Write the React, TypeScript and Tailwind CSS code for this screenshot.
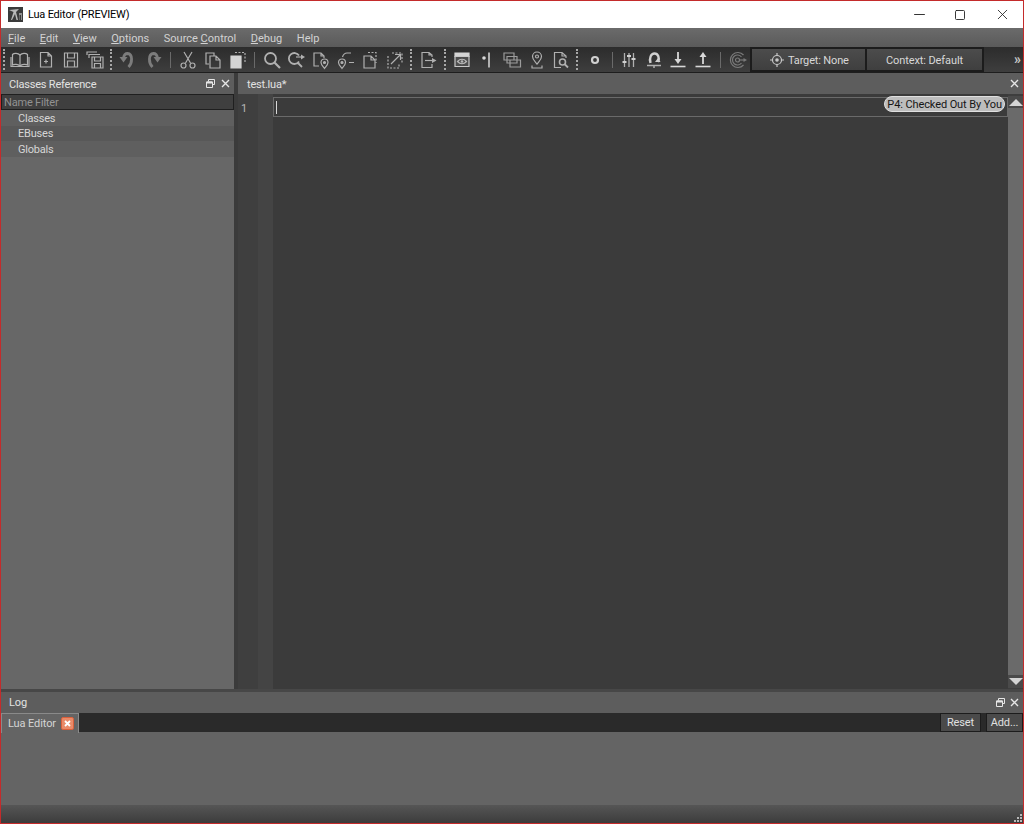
import type { ReactNode } from "react";
import { Minus, Square, X } from "lucide-react";

const font = { fontFamily: 'Roboto, "Liberation Sans", sans-serif' };

function Icon({ w, children }: { w: number; children: ReactNode }) {
  return (
    <div className="flex h-full shrink-0 items-center justify-center" style={{ width: w }}>
      <svg width="20" height="20" viewBox="0 0 20 20" fill="none" stroke="#b0b0b0" strokeWidth="1.200">
        {children}
      </svg>
    </div>
  );
}

function Dots({ w }: { w: number }) {
  return (
    <div className="flex h-full shrink-0 items-center justify-center" style={{ width: w }}>
      <div className="h-[21px] border-l-2 border-dotted border-[#a8a8a8]" />
    </div>
  );
}

function Sep({ w }: { w: number }) {
  return (
    <div className="flex h-full shrink-0 items-center justify-center" style={{ width: w }}>
      <div className="h-[16px] w-px bg-[#6a6a6a]" />
    </div>
  );
}

function Toolbar() {
  return (
    <div className="flex h-[26px] shrink-0 items-center border-b border-[#1e1e1e] bg-gradient-to-b from-[#2c2c2c] to-[#3e3e3e]">
      <Dots w={6} />
      <Icon w={26}>
        <path d="M10 5C8 3 4 3 2.500 4.500V15C4 14 8 14 10 16C12 14 16 14 17.500 15V4.500C16 3 12 3 10 5Z" />
        <path d="M10 5V16M1 7V16.500H19V7" />
      </Icon>
      <Icon w={25}>
        <path d="M4.500 2.500H12L15.500 6V17H4.500ZM12 2.500V6H15.500M10 9.500V13.500M8 11.500H12" />
      </Icon>
      <Icon w={25}>
        <path d="M3.500 3H16.500V17H3.500ZM6.500 3V8H13.500V3M6.500 17V11H13.500V17" />
      </Icon>
      <Icon w={24}>
        <path d="M2 5V2H12M4 8V4.500H15M7 7H18V18H7ZM9.500 7V11H15.500V7M9.500 18V13.500H15.500V18" />
      </Icon>
      <Dots w={8} />
      <Icon w={25}>
        <path d="M10.500 17C14.500 13 15 4 9.500 3.500C7 3.500 6 5 5.500 8" stroke="#7c7c7c" strokeWidth="2.800" />
        <path d="M1.500 7H9.500L5.500 12.500Z" fill="#7c7c7c" stroke="none" />
      </Icon>
      <Icon w={25}>
        <path d="M9.500 17C5.500 13 5 4 10.500 3.500C13 3.500 14 5 14.500 8" stroke="#7c7c7c" strokeWidth="2.800" />
        <path d="M10.500 7H18.500L14.500 12.500Z" fill="#7c7c7c" stroke="none" />
      </Icon>
      <Sep w={11} />
      <Icon w={24}>
        <path d="M6 2L12.500 13M14 2L7.500 13" />
        <circle cx="5.500" cy="15.500" r="2.500" />
        <circle cx="14.500" cy="15.500" r="2.500" />
      </Icon>
      <Icon w={25}>
        <path d="M6 14H3V3H11V6M7 6H13L17 10V18H7ZM13 6V10H17" />
      </Icon>
      <Icon w={25}>
        <path d="M3 6H13V18H3Z" fill="#d4d4d4" stroke="#d4d4d4" />
        <path d="M7 2.500H17V13" strokeDasharray="2 1.500" />
      </Icon>
      <Sep w={9} />
      <Icon w={25}>
        <circle cx="8.500" cy="8.500" r="5.500" strokeWidth="1.800" />
        <path d="M12.500 12.500L18 18" strokeWidth="2.200" />
      </Icon>
      <Icon w={24}>
        <path d="M13 5.500A5.500 5.500 0 1 0 13 11.500M11.500 12.500L16 17" strokeWidth="1.800" />
        <path d="M10 7H16" />
        <path d="M15 4.500L19 7L15 9.500Z" fill="#b0b0b0" stroke="none" />
      </Icon>
      <Icon w={25}>
        <path d="M8 16H3V3H10L13 6V8M10 3V6H13" />
        <path d="M13.500 18.500C11.500 16 10 14.500 10 12.500A3.500 3.500 0 0 1 17 12.500C17 14.500 15.500 16 13.500 18.500Z" />
        <circle cx="13.500" cy="12.500" r="1" fill="#b0b0b0" />
      </Icon>
      <Icon w={25}>
        <path d="M15 3H11C9 3 7 5 6.500 7M13 12.500H18" />
        <path d="M6 18.500C4 16 2.500 14.500 2.500 12.500A3.500 3.500 0 0 1 9.500 12.500C9.500 14.500 8 16 6 18.500Z" />
        <circle cx="6" cy="12.500" r="1" fill="#b0b0b0" />
      </Icon>
      <Icon w={24}>
        <path d="M4 6H11L15 10V18H4ZM11 6V10H15" />
        <path d="M8 2.500H16V13" strokeDasharray="2 1.500" />
      </Icon>
      <Icon w={25}>
        <path d="M3 6V18H14V14M7 3H17V13" strokeDasharray="2 1.500" />
        <path d="M6 14L15 5M10 4.500H15.500V10" />
      </Icon>
      <Dots w={8} />
      <Icon w={25}>
        <path d="M14 7V5L11 2.500H4V17.500H14V14M11 2.500V5H14" />
        <path d="M7 10.500H15" />
        <path d="M14 8L18.500 10.500L14 13Z" fill="#b0b0b0" stroke="none" />
      </Icon>
      <Dots w={9} />
      <Icon w={25}>
        <path d="M3 3H17V6.500H3Z" fill="#d4d4d4" stroke="#d4d4d4" />
        <path d="M3 6.500H17V16.500H3Z" fill="#4e4e4e" stroke="#c8c8c8" />
        <path d="M5.500 11.500C8 8.500 12 8.500 14.500 11.500C12 14.500 8 14.500 5.500 11.500Z" stroke="#b8b8b8" />
        <circle cx="10" cy="11.500" r="1.300" fill="#b8b8b8" stroke="none" />
      </Icon>
      <Icon w={25}>
        <circle cx="7" cy="8" r="1.800" fill="#d8d8d8" stroke="none" />
        <path d="M12 2.500V17.500" strokeWidth="2" />
      </Icon>
      <Icon w={25}>
        <path d="M2 3H12V10H2ZM5 6.500H15V13H5ZM8 10H18.500V17H8Z" stroke="#9c9c9c" />
      </Icon>
      <Icon w={25}>
        <path d="M10 14C7.500 11 5.500 9.500 5.500 6.500A4.500 4.500 0 0 1 14.500 6.500C14.500 9.500 12.500 11 10 14Z" />
        <circle cx="10" cy="6.500" r="1.500" />
        <path d="M5 15.500V18H15V15.500" />
      </Icon>
      <Icon w={24}>
        <path d="M10 17.500H3.500V2.500H11L15 6V8M11 2.500V6H15" />
        <circle cx="11.500" cy="12" r="3" strokeWidth="1.600" />
        <path d="M13.500 14L17 17.500" strokeWidth="1.800" />
      </Icon>
      <Dots w={8} />
      <Icon w={27}>
        <circle cx="10" cy="10" r="3" strokeWidth="2.200" stroke="#d0d0d0" />
      </Icon>
      <Sep w={8} />
      <Icon w={26}>
        <path d="M5.500 3V17M10 3V17M14.500 3V17" strokeWidth="1.300" />
        <path d="M3.500 12H7.500M8 6H12M12.500 9H16.500" strokeWidth="2" stroke="#d0d0d0" />
      </Icon>
      <Icon w={24}>
        <path d="M6.500 13C5 8 7 3.500 10.500 3.500C14 3.500 16 8 14 12" strokeWidth="2.400" stroke="#d0d0d0" />
        <path d="M11 12L16.500 12L14 8Z" fill="#d0d0d0" stroke="none" />
        <path d="M3 15.500H17M10 15.500V18" strokeWidth="1.500" />
      </Icon>
      <Icon w={24}>
        <path d="M10 2V10" strokeWidth="1.800" stroke="#d8d8d8" />
        <path d="M6.500 9H13.500L10 14Z" fill="#d8d8d8" stroke="none" />
        <path d="M2.500 16.500H17.500" strokeWidth="1.600" stroke="#d8d8d8" />
      </Icon>
      <Icon w={25}>
        <path d="M10 14V6" strokeWidth="1.800" stroke="#d8d8d8" />
        <path d="M6.500 7H13.500L10 2Z" fill="#d8d8d8" stroke="none" />
        <path d="M2.500 16.500H17.500" strokeWidth="1.600" stroke="#d8d8d8" />
      </Icon>
      <Sep w={11} />
      <Icon w={24}>
        <g stroke="#7a7a7a">
          <path d="M15.500 5A7.500 7.500 0 1 0 15.500 15M13.500 7A5 5 0 1 0 13.500 13" />
          <circle cx="9.500" cy="10" r="2" />
          <path d="M11 10H16" />
        </g>
        <path d="M15.500 8L19 10L15.500 12Z" fill="#7a7a7a" stroke="none" />
      </Icon>
      <div className="flex h-[25px] w-[117px] shrink-0 items-center border-2 border-[#1c1c1c] bg-gradient-to-b from-[#4c4c4c] to-[#3f3f3f] pl-[17px] text-[11px] tracking-[-0.15px] text-[#d8d8d8]">
        <svg width="16" height="16" viewBox="0 0 16 16" fill="none" stroke="#c8c8c8" strokeWidth="1.200">
          <circle cx="8" cy="8" r="4.500" />
          <circle cx="8" cy="8" r="1.800" fill="#c8c8c8" stroke="none" />
          <path d="M8 1V3.500M8 12.500V15M1 8H3.500M12.500 8H15" />
        </svg>
        <span className="ml-[3px] pt-[3px]">Target: None</span>
      </div>
      <div className="flex h-[25px] w-[117px] shrink-0 items-center justify-center border-2 border-l-0 border-[#1c1c1c] bg-gradient-to-b from-[#4c4c4c] to-[#3f3f3f] pt-[3px] text-[11px] tracking-[-0.1px] text-[#d8d8d8]">
        Context: Default
      </div>
      <div className="ml-auto pr-[2px] pb-[2px] text-[14px] leading-none font-bold text-[#c8c8c8]">»</div>
    </div>
  );
}

function FloatIcon() {
  return (
    <svg width="9" height="9" viewBox="0 0 9 9" fill="none" stroke="#e6e6e6" strokeWidth="1">
      <path d="M2.500 2.500V.500H8.500V5.500H6.500" />
      <path d="M.500 3H6.500V8.500H.500Z" />
      <path d="M.500 3.500H6.500" strokeWidth="2" />
    </svg>
  );
}

function CloseIcon() {
  return (
    <svg width="9" height="9" viewBox="0 0 9 9" stroke="#e6e6e6" strokeWidth="1.400">
      <path d="M1 1L8 8M8 1L1 8" />
    </svg>
  );
}

function ClassesPanel() {
  return (
    <div className="flex w-[233px] shrink-0 flex-col bg-[#676767] text-[11px] tracking-[-0.2px]">
      <div className="flex h-[21px] shrink-0 items-center justify-between bg-[#5d5d5d] pr-[4px] pl-[8px] text-[#e2e2e2]">
        <span className="pt-[3px]">Classes Reference</span>
        <div className="flex items-center gap-[6px]">
          <FloatIcon />
          <CloseIcon />
        </div>
      </div>
      <div className="flex h-[16px] shrink-0 items-center border border-[#1f1f1f] bg-[#3f3f3f] pt-[2px] pl-[2px] text-[#929292]">
        Name Filter
      </div>
      <div className="flex h-[16px] items-center bg-[#5f5f5f] pt-[2px] pl-[17px] text-[#d6d6d6]">Classes</div>
      <div className="flex h-[15px] items-center bg-[#585858] pt-[2px] pl-[17px] text-[#d6d6d6]">EBuses</div>
      <div className="flex h-[16px] items-center bg-[#5f5f5f] pt-[2px] pl-[17px] text-[#d6d6d6]">Globals</div>
    </div>
  );
}

function EditorPanel() {
  return (
    <div className="flex min-w-0 flex-1 flex-col">
      <div className="flex h-[21px] shrink-0 items-center justify-between bg-[#5d5d5d] pr-[4px] pl-[9px] text-[11px] tracking-[-0.2px] text-[#e2e2e2]">
        <span className="pt-[3px]">test.lua*</span>
        <CloseIcon />
      </div>
      <div className="flex min-h-0 flex-1 bg-[#3b3b3b]">
        <div className="w-[20px] shrink-0 bg-[#3f3f3f] pt-[8px] pl-[3px] text-[11px] leading-[14px] text-[#b8b8b8]">1</div>
        <div className="w-[15px] shrink-0 bg-[#444444]" />
        <div className="relative min-w-0 flex-1 pt-[3px]">
          <div className="flex h-[20px] items-center border border-[#6a6a6a] pl-[2px]">
            <div className="h-[13px] w-px bg-[#d8d8d8]" />
          </div>
          <div className="absolute top-[2px] right-[3px] flex h-[16px] items-center rounded-full border border-[#e0e0e0] bg-[#bdbdbd] px-[2px] pt-[2px] text-[11px] tracking-[-0.1px] whitespace-nowrap text-[#161616]">
            P4: Checked Out By You
          </div>
        </div>
        <div className="flex w-[15px] shrink-0 flex-col bg-[#3e3e3e]">
          <div className="mt-[2px] flex h-[12px] shrink-0 items-center justify-center bg-[#4a4a4a]">
            <div className="h-0 w-0 border-x-[7px] border-b-[7px] border-x-transparent border-b-[#d4d4d4]" />
          </div>
          <div className="flex-1 bg-[#6a6a6a]" />
          <div className="mb-[1px] flex h-[13px] shrink-0 items-center justify-center bg-[#4a4a4a]">
            <div className="h-0 w-0 border-x-[7px] border-t-[7px] border-x-transparent border-t-[#d4d4d4]" />
          </div>
        </div>
      </div>
    </div>
  );
}

function LogPanel() {
  return (
    <div className="flex h-[113px] shrink-0 flex-col bg-[#646464] text-[11px] tracking-[-0.1px]">
      <div className="flex h-[21px] shrink-0 items-center justify-between bg-[#5d5d5d] pr-[4px] pl-[8px] text-[#e2e2e2]">
        <span className="pt-[1px]">Log</span>
        <div className="flex items-center gap-[5px]">
          <FloatIcon />
          <CloseIcon />
        </div>
      </div>
      <div className="flex h-[19px] shrink-0 items-start bg-[#2a2a2a]">
        <div className="flex h-[20px] w-[78px] items-center gap-[5px] border border-b-0 border-[#8a8a8a] bg-[#646464] pl-[6px] whitespace-nowrap text-[#d4d4d4]">
          <span className="pt-[1px]">Lua Editor</span>
          <div className="flex h-[13px] w-[13px] shrink-0 items-center justify-center rounded-[2px] border border-[#d9603c] bg-[#e98a68]">
            <svg width="7" height="7" viewBox="0 0 7 7" stroke="#ffffff" strokeWidth="1.800">
              <path d="M1 1L6 6M6 1L1 6" />
            </svg>
          </div>
        </div>
        <div className="ml-auto flex h-[19px] gap-[5px]">
          <div className="flex w-[41px] items-center justify-center border border-[#1c1c1c] bg-[#4a4a4a] pt-[2px] text-[#e0e0e0]">Reset</div>
          <div className="flex w-[37px] items-center justify-center border border-[#1c1c1c] bg-[#4a4a4a] pt-[2px] text-[#e0e0e0]">Add...</div>
        </div>
      </div>
      <div className="flex-1" />
    </div>
  );
}

export default function App() {
  return (
    <div className="flex h-[824px] w-[1024px] flex-col overflow-hidden border border-[#c42b2b] bg-[#666666]" style={font}>
      <div className="flex h-[27px] shrink-0 items-center bg-white text-black">
        <svg className="ml-[7px]" width="15" height="15" viewBox="0 0 15 15">
          <rect width="15" height="15" fill="#3a3a3a" />
          <path d="M1 3L11 2L8 5L10 13H8.500L7 7L4 13H3L5.500 5Z" fill="#b8b8b8" />
          <path d="M11 6H14V13H13V8H11.500V13H11Z" fill="#909090" />
        </svg>
        <span className="ml-[5px] pt-[2px] text-[11px] tracking-[-0.2px]">Lua Editor (PREVIEW)</span>
        <div className="ml-auto flex items-center">
          <div className="flex w-[39px] justify-center">
            <Minus size={17} strokeWidth={1.300} color="#222222" />
          </div>
          <div className="flex w-[42px] justify-center">
            <Square size={12} strokeWidth={1.800} color="#222222" />
          </div>
          <div className="flex w-[42px] justify-center">
            <X size={17} strokeWidth={1.200} color="#222222" />
          </div>
        </div>
      </div>
      <div className="flex h-[19px] shrink-0 items-center gap-[14.500px] bg-gradient-to-b from-[#6b6b6b] to-[#5a5a5a] pt-[3px] pl-[7px] text-[11px] text-[#d2d2d2]">
        <span><u>F</u>ile</span>
        <span><u>E</u>dit</span>
        <span><u>V</u>iew</span>
        <span><u>O</u>ptions</span>
        <span>Source <u>C</u>ontrol</span>
        <span><u>D</u>ebug</span>
        <span>Help</span>
      </div>
      <Toolbar />
      <div className="flex min-h-0 flex-1">
        <ClassesPanel />
        <div className="w-[4px] shrink-0 bg-[#3b3b3b]" />
        <EditorPanel />
      </div>
      <div className="h-[3px] shrink-0 bg-[#474747]" />
      <LogPanel />
      <div className="relative h-[18px] shrink-0 bg-gradient-to-b from-[#565656] to-[#3c3c3c]">
        <div className="absolute right-[1px] bottom-[1px] grid grid-cols-3 gap-px">
          <div className="h-[2px] w-[2px]" />
          <div className="h-[2px] w-[2px]" />
          <div className="h-[2px] w-[2px] bg-[#b8b8b8]" />
          <div className="h-[2px] w-[2px]" />
          <div className="h-[2px] w-[2px] bg-[#b8b8b8]" />
          <div className="h-[2px] w-[2px] bg-[#b8b8b8]" />
          <div className="h-[2px] w-[2px] bg-[#b8b8b8]" />
          <div className="h-[2px] w-[2px] bg-[#b8b8b8]" />
          <div className="h-[2px] w-[2px] bg-[#b8b8b8]" />
        </div>
      </div>
    </div>
  );
}
